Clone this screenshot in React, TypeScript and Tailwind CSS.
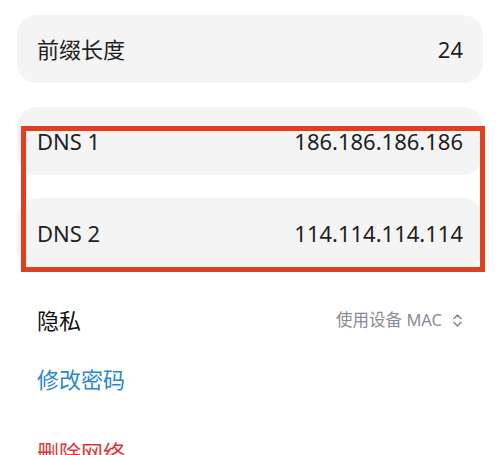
import React from "react";

const font = { fontFamily: '"Noto Sans", "Noto Sans CJK SC", sans-serif' };

function Card({ label, value, h }: { label: string; value: string; h: string }) {
  return (
    <div className={`flex items-center justify-between rounded-[20px] bg-[#f4f4f4] pl-[20px] pr-[20px] ${h}`}>
      <span className="text-[22px] leading-none text-[#1f1f1f]">{label}</span>
      <span className="text-[22px] leading-none text-[#1f1f1f]">{value}</span>
    </div>
  );
}

export default function App() {
  return (
    <div className="relative h-[455px] w-[500px] overflow-hidden bg-white" style={font}>
      <div className="flex flex-col px-[17px] pt-[15px]">
        <Card label="前缀长度" value="24" h="h-[68px]" />
        <div className="h-[24px]" />
        <Card label="DNS 1" value="186.186.186.186" h="h-[68px]" />
        <div className="h-[23px]" />
        <Card label="DNS 2" value="114.114.114.114" h="h-[70px]" />
        <div className="flex h-[62px] mt-[21px] items-center justify-between pl-[20px] pr-[20px]">
          <span className="text-[22px] leading-none text-[#111111]">隐私</span>
          <span className="flex items-center gap-[10px] text-[16.5px] leading-none text-[#878b94]">
            使用设备 MAC
            <svg width="11" height="15" viewBox="0 0 11 15" fill="none" stroke="#878b94" strokeWidth="1.7" strokeLinecap="round" strokeLinejoin="round">
              <path d="M2 5.5 L5.5 2 L9 5.5" />
              <path d="M2 9.5 L5.5 13 L9 9.5" />
            </svg>
          </span>
        </div>
        <div className="flex h-[56px] items-center pl-[20px]">
          <span className="text-[22px] leading-none text-[#2a86d3]">修改密码</span>
        </div>
        <div className="flex h-[80px] items-center pl-[20px] pt-[10px]">
          <span className="text-[22px] leading-none text-[#d8383a]">删除网络</span>
        </div>
      </div>
      <div className="absolute left-[21px] top-[126px] h-[146px] w-[464px] border-[5px] border-[#e0401f]" />
    </div>
  );
}
